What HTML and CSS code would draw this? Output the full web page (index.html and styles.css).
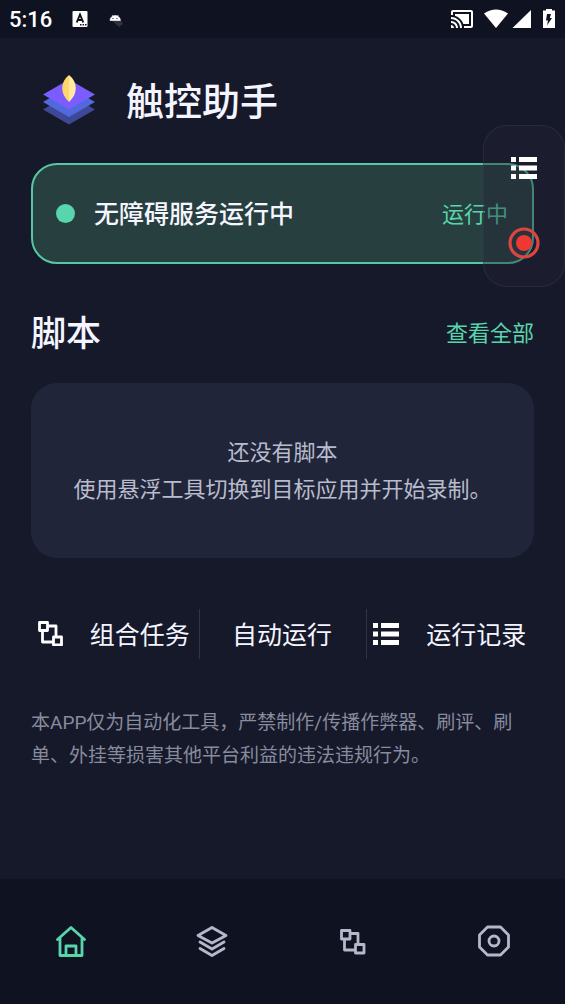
FILE: index.html
```html
<!DOCTYPE html>
<html lang="zh-CN">
<head>
<meta charset="utf-8">
<meta name="viewport" content="width=device-width, initial-scale=1">
<title>触控助手</title>
<link rel="stylesheet" href="styles.css">
</head>
<body>
<div class="app">
  <div class="statusbar">
    <span class="clock">5:16</span>
    <svg class="note-icon" width="16" height="18" viewBox="0 0 16 18" aria-hidden="true"><rect x="0.500" y="1" width="15" height="16" rx="1" fill="#fff"/><path d="M4.700 12.500L8 4.500l3.300 8M6 10h4" fill="none" stroke="#0f1220" stroke-width="1.900"/><path d="M8 14h1.500v1.500H8zM10.500 14H12v1.500h-1.500zM13 14h1.500v1.500H13z" fill="#0f1220"/></svg>
    <svg class="droid-icon" width="16" height="16" viewBox="0 0 16 16" aria-hidden="true"><path d="M3 9h10l2 4-4 3z" fill="#30313c"/><path d="M2 9.500a5.200 5 0 0 1 10.400 0zM4 4l2 2.500M10.500 4l-2 2.500" fill="#fff" stroke="#fff" stroke-width=".6"/><path d="M4.500 7h1v1h-1zM8.500 7h1v1h-1z" fill="#0f1220"/></svg>
    <svg class="status-end" width="104" height="22" viewBox="0 0 104 22" aria-hidden="true">
      <path transform="translate(-1 -1)" fill="#fff" d="M1 18v3h3c0-1.660-1.340-3-3-3zm0-4v2c2.760 0 5 2.240 5 5h2c0-3.870-3.130-7-7-7zm18-7H5v1.630c3.960 1.280 7.090 4.410 8.370 8.370H19V7zM1 10v2c4.970 0 9 4.030 9 9h2c0-6.080-4.930-11-11-11zm20-7H3c-1.100 0-2 .9-2 2v3h2V5h18v14h-7v2h7c1.100 0 2-.9 2-2V5c0-1.100-.9-2-2-2z"/>
      <path d="M33 5.500Q45-2.500 57 5.500L45 20z" fill="#fff"/>
      <path d="M80 2v18H61.500z" fill="#fff"/>
      <path d="M92 2.500h3V1h6v1.500h3V20H92z" fill="#fff"/><path d="M96 6h4l-1.200 4h2.200l-5 7.500 1-5h-2z" fill="#0f1220"/>
    </svg>
  </div>

  <main class="content">
    <header class="brand">
      <svg class="logo" width="54" height="52" viewBox="0 0 54 52" aria-hidden="true">
        <path d="M1 35.500l26-15 26 15-26 15z" fill="#3f4896"/>
        <path d="M1 28l26-15 26 15-26 15z" fill="#5268dd"/>
        <path d="M1 20.500l26-15 26 15-26 15z" fill="#7a5cff"/>
        <path d="M27 1C18 8 18 20 27 28z" fill="#ffd66b"/><path d="M27 1C36 8 36 20 27 28z" fill="#ffeaa0"/>
      </svg>
      <h1>触控助手</h1>
    </header>

    <section class="service">
      <span class="dot"></span>
      <h2>无障碍服务运行中</h2>
      <span class="state">运行中</span>
    </section>

    <div class="section-head">
      <h2>脚本</h2>
      <a href="#all">查看全部</a>
    </div>

    <section class="empty">
      <p>还没有脚本</p>
      <p>使用悬浮工具切换到目标应用并开始录制。</p>
    </section>

    <div class="actions">
      <button type="button"><svg width="25" height="26" viewBox="0 0 25 26" aria-hidden="true"><path d="M1.500 2.500h8v8h-8zM15.500 17h8v8h-8zM10 6h8v11M4.500 10.500V22h11" fill="none" stroke="#fff" stroke-width="2.800" stroke-linejoin="round"/></svg>组合任务</button>
      <button type="button">自动运行</button>
      <button type="button"><svg width="26" height="24" viewBox="0 0 26 24" aria-hidden="true"><path d="M0 2h5v5H0zM8 2h18v5H8zM0 10.500h5v5H0zM8 10.500h18v5H8zM0 19h5v5H0zM8 19h18v5H8z" fill="#fff"/></svg>运行记录</button>
    </div>

    <p class="notice">本APP仅为自动化工具，严禁制作/传播作弊器、刷评、刷单、外挂等损害其他平台利益的违法违规行为。</p>
  </main>

  <nav class="tabs">
    <a class="active" href="#home" aria-label="首页"><svg width="34" height="34" viewBox="0 0 34 34"><path d="M3.500 15.500L17 3.500l13.500 12M6 14v17.500h22V14M12 31v-9h10v9" /></svg></a>
    <a href="#scripts" aria-label="脚本"><svg width="34" height="34" viewBox="0 0 34 34"><path d="M17 3.500l14 8-14 7.500-14-7.500zM5 18l12 7 12-7M5 24.500l12 7 12-7"/></svg></a>
    <a href="#tasks" aria-label="组合任务"><svg width="34" height="34" viewBox="0 0 34 34"><path d="M5.500 6.500h8.500V15H5.500zM19.500 20.500H28V29h-8.500zM14 9.500h8v11M8.500 15v11h11"/></svg></a>
    <a href="#settings" aria-label="设置"><svg width="34" height="34" viewBox="0 0 34 34"><path d="M10.500 3h13l8 8v12l-8 8h-13l-8-8V11z"/><circle cx="17" cy="17" r="5"/></svg></a>
  </nav>

  <aside class="floater">
    <button type="button" aria-label="脚本列表"><svg width="26" height="22" viewBox="0 0 26 22"><path d="M0 0h5v5H0zM8 0h18v5H8zM0 8.500h5v5H0zM8 8.500h18v5H8zM0 17h5v5H0zM8 17h18v5H8z" fill="#fff"/></svg></button>
    <button type="button" aria-label="录制"><svg width="32" height="32" viewBox="0 0 32 32"><circle cx="16" cy="16" r="14" fill="none" stroke="#e04440" stroke-width="3.200"/><circle cx="16" cy="16" r="8" fill="#ed3833"/></svg></button>
  </aside>
</div>
</body>
</html>
```
FILE: styles.css
```css
* { box-sizing: border-box; }

body {
  margin: 0;
  background: #16192a;
  color: #f4f5ff;
  font-family: Roboto, "Noto Sans CJK SC", sans-serif;
}

h1, h2, p { margin: 0; }
a { color: inherit; text-decoration: none; }
svg { display: block; flex: none; }

button {
  padding: 0;
  border: 0;
  background: none;
  color: inherit;
  font: inherit;
}

.app {
  position: relative;
  display: flex;
  flex-direction: column;
  min-height: 100vh;
}

.statusbar {
  display: flex;
  align-items: center;
  height: 38px;
  padding: 0 10px 0 9px;
  background: #0f1220;
  color: #fff;
}

.clock {
  padding-top: 2px;
  font-size: 22px;
  font-weight: 500;
  line-height: 36px;
}

.note-icon { margin-left: 20px; }
.droid-icon { margin-left: 20px; }
.status-end { margin-left: auto; }

.content {
  flex: 1;
  padding: 36px 31px 0;
}

.brand {
  display: flex;
  align-items: center;
  gap: 30px;
  padding-left: 11px;
}

.brand h1 {
  padding-top: 4px;
  font-size: 38px;
  font-weight: 500;
  line-height: 48px;
}

.service {
  display: flex;
  align-items: center;
  height: 101px;
  margin-top: 37px;
  padding: 0 24px 0 23px;
  border: 2px solid #55c7a2;
  border-radius: 26px;
  background: #273f3f;
}

.dot {
  width: 19px;
  height: 19px;
  margin-right: 19px;
  border-radius: 50%;
  background: #59d5ac;
}

.service h2 {
  padding-bottom: 4px;
  font-size: 25px;
  font-weight: 500;
}

.state {
  margin-left: auto;
  padding-bottom: 4px;
  color: #59d5ac;
  font-size: 22px;
}

.section-head {
  display: flex;
  align-items: center;
  justify-content: space-between;
  margin-top: 44px;
}

.section-head h2 {
  padding-top: 4px;
  font-size: 35px;
  font-weight: 500;
  line-height: 46px;
}

.section-head a {
  padding-bottom: 4px;
  color: #59d5ac;
  font-size: 22px;
}

.empty {
  margin-top: 25px;
  padding: 51px 20px 50px;
  border-radius: 26px;
  background: #21253a;
  color: #b8bccd;
  font-size: 22px;
  line-height: 37px;
  text-align: center;
}

.actions {
  display: grid;
  grid-template-columns: repeat(3, 1fr);
  margin-top: 51px;
}

.actions button {
  display: flex;
  align-items: center;
  justify-content: center;
  gap: 27px;
  height: 50px;
  padding: 0 2px 2px 0;
  font-size: 25px;
  white-space: nowrap;
}

.actions button + button { border-left: 1px solid #30334b; }

.notice {
  margin-top: 47px;
  color: #888b9e;
  font-size: 19px;
  line-height: 33px;
}

.tabs {
  display: grid;
  grid-template-columns: repeat(4, 1fr);
  height: 125px;
  padding-bottom: 2px;
  background: #0f1220;
  color: #b5b8ca;
}

.tabs a {
  display: flex;
  align-items: center;
  justify-content: center;
}

.tabs svg {
  fill: none;
  stroke: currentColor;
  stroke-width: 2.8;
  stroke-linejoin: round;
  stroke-linecap: round;
}

.tabs .active { color: #59d5ac; }

.floater {
  position: absolute;
  top: 125px;
  right: 0;
  display: flex;
  flex-direction: column;
  align-items: center;
  justify-content: space-between;
  width: 82px;
  height: 162px;
  padding: 31px 0 27px;
  border: 1px solid rgba(60, 62, 84, .4);
  border-radius: 24px;
  background: rgba(34, 36, 56, .4);
}
```
